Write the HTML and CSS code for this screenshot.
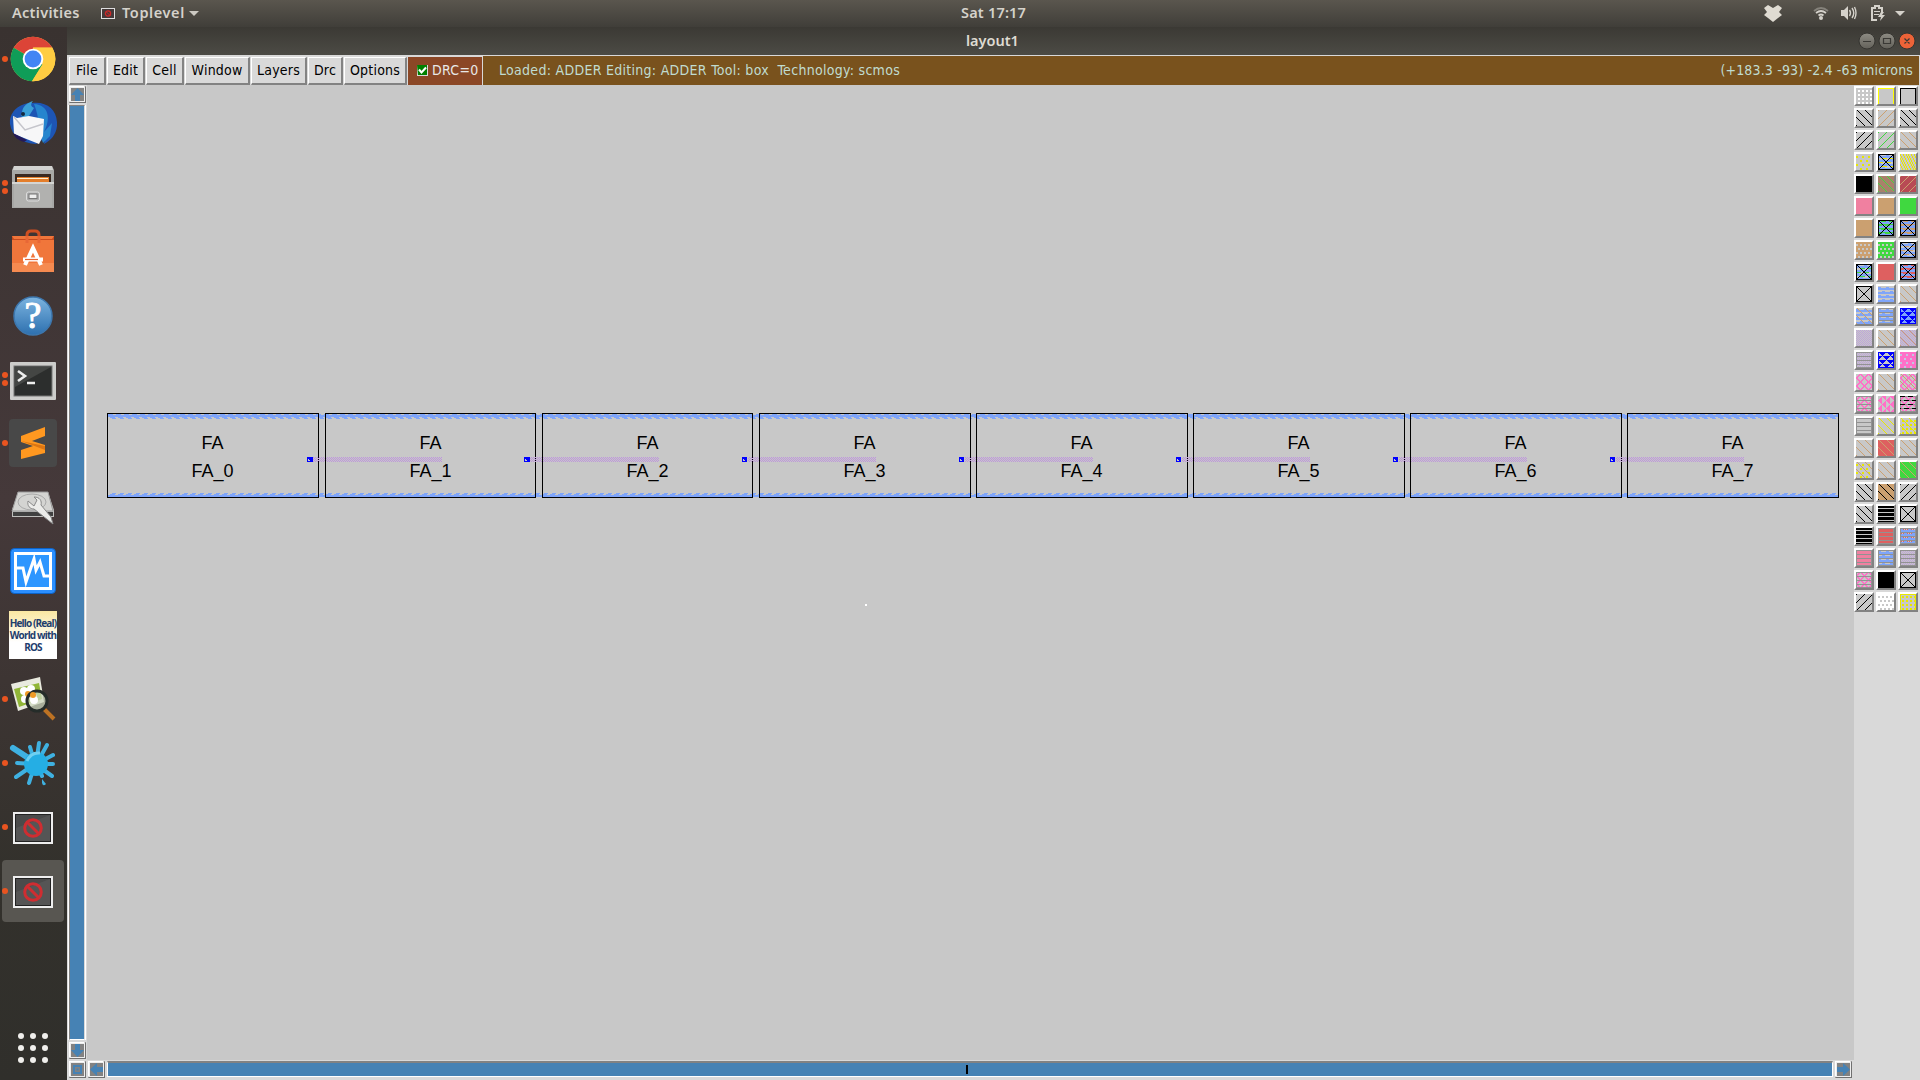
FILE: index.html
```html
<!DOCTYPE html>
<html lang="en">
<head>
<meta charset="utf-8">
<title>layout1</title>
<link rel="stylesheet" href="styles.css">
</head>
<body>
<header class="topbar">
  <span class="activities">Activities</span>
  <svg class="app-icon" width="14" height="11" viewBox="0 0 14 11"><rect x=".5" y=".5" width="13" height="10" fill="#443a3a" stroke="#ddd"/><circle cx="7" cy="5.500" r="2.600" fill="none" stroke="#d02828" stroke-width="1.300"/><path d="M5 3.500l4 4" stroke="#d02828"/></svg>
  <span class="app-name">Toplevel</span>
  <svg class="caret" width="10" height="5" viewBox="0 0 10 5"><path d="M0 0h10L5 5z" fill="#ccc9c2"/></svg>
  <span class="clock">Sat 17:17</span>
  <svg class="tray" width="160" height="27" viewBox="1760 0 160 27" fill="#d5d2cb">
    <path d="M1764 8l4-3 5 3 5-3 4 3-3 4 3 3-4 3-5 4-5-4-4-3 3-3z" fill="#dfdbd2"/>
    <g fill="none" stroke="#d5d2cb" stroke-width="1.700"><path d="M1814 11q7-6 14 0" stroke="#85827b"/><path d="M1816 13q5-4 10 0M1818.500 15.500q2.500-2 5 0"/></g><circle cx="1821" cy="18" r="2"/>
    <path d="M1841 10h3l4-4v14l-4-4h-3z"/><path d="M1849.500 10q2 3 0 6M1852 8q3.500 5 0 10M1854.500 7q3 6 0 12" fill="none" stroke="#d5d2cb" stroke-width="1.400"/>
    <path d="M1877 20h-5V8h3V6h4v2h3v5" fill="none" stroke="#d5d2cb" stroke-width="2"/><path d="M1874 11h6v1h-6zM1874 14h5v1h-5zM1881 12l-3 5h3l-1 4 5-6h-3l2-3z"/>
    <path d="M1895 11h10l-5 5z"/>
  </svg>
</header>
<div class="desktop">
  <nav class="dock">
    <div class="slot"><i class="pip"></i><svg width="48" height="48" viewBox="0 0 48 48"><circle cx="24" cy="24" r="22.300" fill="#ffcd42"/><path d="M24 24L4.700 12.850A22.300 22.300 0 0 1 43.300 12.850H24z" fill="#dc4437"/><path d="M24 24L4.700 12.850A22.300 22.300 0 0 0 23 46.300L33.700 29.600z" fill="#0f9d58"/><path d="M24 12.500h19.300A22.300 22.300 0 0 1 23 46.300L33.600 29z" fill="#ffcd42"/><circle cx="24" cy="24" r="10.300" fill="#fff"/><circle cx="24" cy="24" r="8.400" fill="#4285f4"/></svg></div>
    <div class="slot"><svg width="48" height="48" viewBox="0 0 48 48"><path d="M1 25C0 13 10 4 23 4c16-2 26 8 25 23-1 9-6 14-13 18l1-6-9 6C13 44 3 38 1 25z" fill="#1d55b4"/><path d="M13 13c1-6 5-9 11-11-3 4-2 5 1 7l-7 11-6-3z" fill="#3aa0d8"/><path d="M25 5c15 1 17 15 10 28l8-9-2 13-7 7c-5-12-3-25-9-39z" fill="#2685ce"/><path d="M4 17l4 2 12-2 15 3-1 17-4 8L5 35z" fill="#f7f7f8"/><path d="M5 18l11 13 18-6" fill="none" stroke="#c5c5cb" stroke-width="1.500"/><path d="M4 34l14 7-3 2C9 41 6 39 4 34z" fill="#241958"/><circle cx="14" cy="15" r="2" fill="#15293f"/></svg></div>
    <div class="slot"><i class="pip two"></i><svg width="48" height="48" viewBox="0 0 48 48"><path d="M5 3h38l2 4v38H3V7z" fill="#a8a8a6"/><path d="M5 3h38l1 4H4z" fill="#d3d3d1"/><path d="M6 11h36v9H6z" fill="#3a2920"/><path d="M8 14h32v6H8z" fill="#e47e2b"/><path d="M8 15h31v1H8z" fill="#fff0cf"/><path d="M5 20h38v24H5z" fill="#b1b1af"/><path d="M3 19h42v2H3z" fill="#d5d5d3"/><rect x="17.500" y="29" width="13" height="9" rx="2" fill="#aaa" stroke="#ddd"/><rect x="20" y="31" width="8" height="4.500" fill="#eee" stroke="#777"/></svg></div>
    <div class="slot low1"><svg width="48" height="48" viewBox="0 0 48 48"><path d="M18 15V7q0-4 4-4h4q4 0 4 4v8" fill="none" stroke="#cf4f21" stroke-width="3"/><path d="M3 8h42v36H3z" fill="#f0763b"/><path d="M3 8l2 3h38l2-3v4H3z" fill="#c84a1e"/><path d="M3 35h42v9H3z" fill="#f58a50"/><path d="M18 15V8M30 15V8" stroke="#e76736" stroke-width="3"/><path d="M16 37l8-17 8 17M14 31.500h20" fill="none" stroke="#fff" stroke-width="4"/><path d="M16 31.500h13" stroke="#e76736" stroke-width="1.200"/></svg></div>
    <div class="slot low1"><svg width="48" height="48" viewBox="0 0 48 48"><defs><linearGradient id="help" x2="0" y2="1"><stop stop-color="#7cb4e0"/><stop offset="1" stop-color="#2d70af"/></linearGradient></defs><circle cx="24" cy="24" r="19" fill="url(#help)" stroke="#3d77ae" stroke-width="1.500"/><text x="24" y="36" text-anchor="middle" class="question">?</text></svg></div>
    <div class="slot low2"><i class="pip two"></i><svg width="48" height="48" viewBox="0 0 48 48"><rect x="1" y="5" width="46" height="38" rx="1" fill="#cdcdcb"/><rect x="5" y="9" width="38" height="30" fill="#2c2e2d" stroke="#777"/><path d="M6 10h36L6 30z" fill="#444644"/><path d="M9 14l7 5-7 5M18 26h8" fill="none" stroke="#eee" stroke-width="2.600"/></svg></div>
    <div class="slot"><i class="pip"></i><svg width="48" height="48" viewBox="0 0 48 48"><rect width="48" height="48" rx="4" fill="#484848"/><path d="M12 17l24-9v9l-13 5 13 4v8l-24 6v-9l12-4-12-4z" fill="#ff9820"/><path d="M12 22l24 5v4l-13-5z" fill="#dc7613"/></svg></div>
    <div class="slot low1"><svg width="48" height="48" viewBox="0 0 48 48"><path d="M9 8h30l6 18v7H3v-7z" fill="#bebebc"/><path d="M9 8h30l5 19H3z" fill="#d4d4d2" stroke="#999"/><path d="M4 28h40v4H4z" fill="#404040"/><ellipse cx="23" cy="18" rx="14" ry="8" fill="none" stroke="#aaa"/><path d="M19 17l6 5 3-6-3-3c6 0 8 4 7 8l10 12 2 7-19-15c-4 0-7-3-6-8z" fill="#ececea" stroke="#898989"/></svg></div>
    <div class="slot"><svg width="48" height="48" viewBox="0 0 48 48"><rect x="1.500" y="1.500" width="45" height="45" rx="4" fill="#2b8fff" stroke="#0b63c9"/><rect x="6.500" y="6.500" width="35" height="35" fill="#2d96ff" stroke="#fff" stroke-width="3"/><path d="M8 21h6l3 14 8-23 2 11 4-8 4 14h7" fill="none" stroke="#fff" stroke-width="3"/></svg></div>
    <div class="slot"><div class="ros"><span>Hello (Real)</span><span>World with</span><span>ROS</span></div></div>
    <div class="slot"><i class="pip"></i><svg width="48" height="48" viewBox="0 0 48 48"><path d="M2 9l29-7 4 25-26 9z" fill="#e9eadf"/><path d="M5 14l25-6 3 16-23 8z" fill="#91b638"/><g fill="#fff"><circle cx="15" cy="16" r="4"/><circle cx="22" cy="14" r="4"/><circle cx="24" cy="22" r="4"/><circle cx="16" cy="24" r="4"/></g><circle cx="19" cy="19" r="3" fill="#ef9b26"/><path d="M35 34l10 10" stroke="#bd7223" stroke-width="4"/><circle cx="28" cy="26" r="10" fill="#ccd7bd" fill-opacity=".75" stroke="#252c29" stroke-width="3"/><circle cx="25" cy="25" r="4" fill="#fff"/><circle cx="24" cy="20" r="3" fill="#ef9b26"/></svg></div>
    <div class="slot"><i class="pip"></i><svg width="48" height="48" viewBox="0 0 48 48"><g stroke="#3fb1e1" stroke-linecap="round" stroke-width="4"><path d="M27 24L4 9" stroke-width="6"/><path d="M26 25L21 8M27 25L30 4M28 24L38 6M29 24L44 16M29 25L44 25M29 27L43 37M25 28L20 44M23 27L7 38M24 25L8 24M29 29L33 37"/></g><circle cx="27" cy="25" r="12" fill="#25aee4"/><path d="M33 40l4 5q-3 3-4-1z" fill="#3fb1e1"/><path d="M18 22q4-9 13-8" fill="none" stroke="#6ed0f2" stroke-width="3"/></svg></div>
    <div class="slot low1"><i class="pip"></i><svg width="40" height="32" viewBox="0 0 40 32"><use href="#blocked"/></svg></div>
    <div class="slot low1 active"><i class="pip"></i><svg width="40" height="32" viewBox="0 0 40 32"><g id="blocked"><rect width="40" height="32" fill="#eee"/><rect x="2.500" y="2.500" width="35" height="27" fill="#4b4b4b" stroke="#222"/><path d="M3 29V16L37 3v26z" fill="#606060" opacity=".5"/><circle cx="20" cy="16" r="8.300" fill="none" stroke="#cf2d31" stroke-width="3"/><path d="M14 10l12 12" stroke="#cf2d31" stroke-width="3"/></g></svg></div>
    <svg class="apps" width="32" height="32" viewBox="0 0 32 32" fill="#f0efec"><circle cx="4" cy="4" r="3"/><circle cx="16" cy="4" r="3"/><circle cx="28" cy="4" r="3"/><circle cx="4" cy="16" r="3"/><circle cx="16" cy="16" r="3"/><circle cx="28" cy="16" r="3"/><circle cx="4" cy="28" r="3"/><circle cx="16" cy="28" r="3"/><circle cx="28" cy="28" r="3"/></svg>
  </nav>
  <main class="window">
    <div class="titlebar"><span class="title">layout1</span>
      <svg width="58" height="18" viewBox="0 0 58 18"><defs><linearGradient id="knob" x2="0" y2="1"><stop stop-color="#8e8c84"/><stop offset="1" stop-color="#63615a"/></linearGradient></defs><g stroke="#353430"><circle cx="9" cy="9" r="8" fill="url(#knob)"/><circle cx="29" cy="9" r="8" fill="url(#knob)"/><circle cx="49" cy="9" r="8" fill="#ed6338"/></g><path d="M5 9.500h8M25.500 6.500h7v5h-7zM46.500 6.500l5 5m0-5l-5 5" fill="none" stroke="#3a3935" stroke-width="1.200"/></svg>
    </div>
    <div class="menubar">
      <button class="menu m-file">File</button><button class="menu m-edit">Edit</button><button class="menu m-cell">Cell</button><button class="menu m-window">Window</button><button class="menu m-layers">Layers</button><button class="menu m-drc">Drc</button><button class="menu m-options">Options</button>
      <div class="drc"><svg width="11" height="11" viewBox="0 0 11 11"><path d="M0 0h11v11H0z" fill="#d9d9d9"/><path d="M0 0h10v10H1z" fill="#008000"/><path d="M2 4.500l2.500 3L9 2.500" fill="none" stroke="#fff" stroke-width="2"/></svg><span>DRC=0</span></div>
      <div class="status"><span class="msg">Loaded: ADDER Editing: ADDER Tool: box&nbsp; Technology: scmos</span><span class="coords">(+183.3 -93) -2.4 -63 microns</span></div>
    </div>
    <div class="work">
      <div class="vscroll">
        <div class="arrow"><svg width="13" height="13" viewBox="0 0 13 13"><path d="M6.500 0l6.500 7H9v6H4V7H0z"/></svg></div>
        <div class="track"></div>
        <div class="arrow"><svg width="13" height="13" viewBox="0 0 13 13"><path d="M6.500 13L0 6h4V0h5v6h4z"/></svg></div>
      </div>
      <svg class="drawing" id="drawing" width="1767" height="975" viewBox="87 85 1767 975"></svg>
      <div class="palette" id="palette"></div>
      <div class="hscroll">
        <div class="arrow"><svg width="13" height="13" viewBox="0 0 13 13"><path d="M2 2h9v9H2zM4 4v5h5V4z" fill-rule="evenodd"/><path d="M5.500 5.500h2v2h-2z"/></svg></div>
        <div class="arrow"><svg width="13" height="13" viewBox="0 0 13 13"><path d="M0 6.500L7 0v4h6v5H7v4z"/></svg></div>
        <div class="track"><i></i></div>
        <div class="arrow"><svg width="13" height="13" viewBox="0 0 13 13"><path d="M13 6.500L6 0v4H0v5h6v4z"/></svg></div>
      </div>
    </div>
  </main>
</div>
<script src="layout.js"></script>
</body>
</html>
```
FILE: styles.css
```css
* { box-sizing: border-box; }
body { margin: 0; width: 1920px; height: 1080px; overflow: hidden; background: #3b3934; font-family: "DejaVu Sans Condensed", "DejaVu Sans", sans-serif; font-stretch: condensed; }
svg { display: block; }
.topbar { height: 27px; display: grid; grid-template-columns: 101px 21px 67px 10px 1fr 160px; grid-template-rows: 27px; align-items: center; background: linear-gradient(#5a564e, #403e39); color: #d5d2cb; font: 600 14.5px/24px "Noto Sans", sans-serif; }
.topbar span { height: 27px; }
.activities { padding-left: 12px; letter-spacing: .3px; }
.app-name { letter-spacing: .6px; }
.clock { padding-left: 762px; white-space: nowrap; letter-spacing: .2px; }
.desktop { display: flex; height: 1053px; }
.dock { width: 67px; display: flex; flex-direction: column; align-items: center; background: linear-gradient(#393230, #45393a 45%, #3d3533 62%, #33312c 80%, #302f2b); }
.slot { width: 67px; height: 64px; flex: none; display: grid; place-items: center; padding-right: 1px; position: relative; }
.slot.active::before { content: ""; position: absolute; left: 2px; top: 1px; width: 62px; height: 62px; border-radius: 4px; background: #585651; }
.slot svg { position: relative; }
.low1 { padding-top: 2px; }
.low2 { padding-top: 3px; }
.pip { position: absolute; z-index: 1; left: 2px; top: 29px; width: 6px; height: 6px; border-radius: 3px; background: #e95420; }
.pip.two { top: 25px; box-shadow: 0 8px #e95420; }
.question { font: 38px "Liberation Serif", serif; fill: #fff; stroke: #fff; }
.ros { width: 48px; height: 48px; background: linear-gradient(#fae7a2, #fff 65%); display: flex; flex-direction: column; align-items: center; justify-content: center; color: #1e3d6d; font: 700 10px/12px "Open Sans", sans-serif; letter-spacing: -.85px; white-space: nowrap; }
.apps { margin: 109px 1px 0 0; }
.window { flex: 1; display: flex; flex-direction: column; background: #d9d9d9; }
.titlebar { height: 28px; display: flex; justify-content: flex-end; align-items: center; padding-right: 4px; background: linear-gradient(#3b3934, #4c4b45); color: #dfdbd2; font: 600 14.5px/26px "Noto Sans", sans-serif; }
.title { flex: 1; height: 28px; padding-left: 899px; }
.menubar { height: 30px; display: flex; padding: 1px 1px 0 2px; font-size: 14px; }
.menu { height: 28px; margin: 1px 1px 0 0; padding: 0 0 1px; border: 1px solid #fff; border-right: 2px solid #828282; border-bottom: 2px solid #828282; background: #d9d9d9; font: inherit; font-stretch: condensed; letter-spacing: .2px; text-align: center; color: #000; white-space: nowrap; }
.m-file { width: 37px; } .m-edit { width: 38px; } .m-cell { width: 38px; } .m-window { width: 65px; } .m-layers { width: 56px; } .m-drc { width: 35px; } .m-options { width: 63px; }
.drc { margin-top: 1px; width: 74px; height: 28px; background: #8b4726; color: #e8e8e8; display: flex; align-items: center; gap: 4px; padding: 0 0 1px 9px; letter-spacing: .3px; }
.drc span { padding-bottom: 1px; }
.status { margin-left: 1px; flex: 1; height: 29px; background: #79521d; color: #c0dcd0; display: flex; justify-content: space-between; align-items: center; padding: 0 6px 1px 16px; }
.msg { letter-spacing: .29px; }
.coords { letter-spacing: .16px; }
.work { flex: 1; display: grid; grid-template: 975px 20px / 20px 1767px 66px; }
.vscroll { display: flex; flex-direction: column; padding: 1px 0 1px 2px; gap: 2px; }
.vscroll .track { flex: 1; width: 16px; background: #4682b4; border: 1px solid #828282; border-right-color: #d9d9d9; border-bottom-color: #fff; box-shadow: 1px 0 #fff, -1px 0 #fff; }
.arrow { flex: none; width: 17px; height: 17px; border: 1px solid #fff; border-right: 2px solid #707070; border-bottom: 2px solid #707070; background: #828282; outline: 1px solid #eee; outline-offset: -2px; }
.arrow svg { fill: #4682b4; margin: .5px; }
.drawing { background: #c8c8c8; shape-rendering: crispEdges; }
.drawing text { font: 18px "Liberation Sans", sans-serif; text-anchor: middle; }
.palette { display: grid; grid-template-columns: repeat(3, 20px); grid-auto-rows: 20px; gap: 2px; align-content: start; padding-top: 1px; }
.swatch { border: 2px solid #fff; border-right-color: #828282; border-bottom-color: #828282; background: #c8c8c8; }
.swatch svg { shape-rendering: crispEdges; }
.hscroll { grid-column: 1 / 3; display: flex; padding: 1px 2px 2px 2px; gap: 2px; }
.hscroll .track { flex: 1; height: 16px; border: 1px solid #fff; border-top: 2px solid #828282; background: #4682b4; }
.hscroll .track i { display: block; width: 2px; height: 9px; margin: 2px 0 0 858px; background: #000; }
```
FILE: layout.js
```js
const mod = (a, n) => ((a % n) + n) % n;
const patterns = {
  solid: () => true,
  back: (x, y) => mod(x - y - 1, 8) === 0,
  fwd: (x, y) => mod(x + y, 8) === 0,
  dots: (x, y) => x % 4 > 1 && y % 4 > 1,
  tile: (x, y) => mod(x + (y & 4 ? 2 : 0), 4) < 2 && y % 4 > 1,
  stag: (x, y) => mod(x + (y & 4 ? 2 : 0), 6) < 2 && y % 4 > 1,
  speck: (x, y) => mod(x * 3 + (y >> 1) * 5, 8) < 3,
  u: (x, y) => x === 0 || x === 15 || y === 0,
  x: (x, y) => x === 0 || x === 15 || y === 0 || y === 15 || x === y || x + y === 15,
  metal: (x, y) => y % 4 > 1 || mod(x + (y & 4 ? 4 : 0), 8) < 3 && y % 4 === 1,
  dash: (x, y) => y % 4 === 0 && mod(x + y, 8) < 5,
  check: (x, y) => (x + y) % 2 === 0,
  lines: (x, y) => y % 4 === 0 || y === 15 || x === 0 || x === 15,
  bars: (x, y) => y % 4 !== 2,
  tri: (x, y) => x === 0 || x === 15 || y === 0 || y === 15 || Math.abs(mod(x + (y & 4 ? 4 : 0), 8) - 4) < 4 - y % 4,
  triv: (x, y) => Math.abs(mod(y + (x & 4 ? 4 : 0), 8) - 4) < 1 + x % 4,
  mesh: (x, y) => mod(x + y - 3, 8) < 2 || mod(x - y - 4, 8) < 2
};
const K = '#000', T = '#cba070', G = '#40d840', R = '#de6060', P = '#f080a0', M = '#7fa5fa', Y = '#e8e800', V = '#bea4da', H = '#929292', B = '#0000ff', N = '#ff70c8', W = '#fff', C = '#c8c8c8';
const layers = [
  [['dots', W]], [['u', '#ff0']], [['u', K]],
  [['back', K]], [['fwd', T]], [['back', K]],
  [['fwd', K]], [['fwd', G]], [['back', T]],
  [['stag', Y]], [['metal', M], ['dash', Y], ['x', K]], [['speck', Y]],
  [['solid', K]], [['solid', '#a8826a'], ['back', G]], [['solid', '#b84a54'], ['fwd', T]],
  [['solid', P]], [['solid', T]], [['solid', G]],
  [['solid', T]], [['solid', G], ['metal', M], ['x', K]], [['solid', T], ['metal', M], ['x', K]],
  [['solid', T], ['tile', C]], [['solid', G], ['tile', C]], [['metal', M], ['dash', T], ['x', K]],
  [['metal', M], ['dash', G], ['x', K]], [['solid', R]], [['solid', R], ['metal', M], ['x', K]],
  [['x', K]], [['metal', M]], [['back', T]],
  [['metal', M], ['back', T]], [['metal', M], ['lines', H]], [['solid', M], ['tri', B]],
  [['check', V]], [['back', T]], [['check', V], ['back', T]],
  [['check', V], ['lines', H]], [['tri', B]], [['solid', N], ['stag', '#c4c4e0']],
  [['mesh', N]], [['back', T]], [['mesh', N], ['back', T]],
  [['mesh', N], ['lines', H]], [['triv', N]], [['mesh', N], ['lines', H], ['dash', K]],
  [['lines', H]], [['back', Y]], [['dots', Y], ['back', Y]],
  [['back', T]], [['solid', R], ['back', T]], [['back', T]],
  [['stag', Y], ['back', T]], [['back', T]], [['solid', G], ['back', T]],
  [['back', K]], [['solid', T], ['back', K]], [['fwd', K]],
  [['back', K]], [['bars', K]], [['x', K]],
  [['bars', K]], [['solid', R], ['lines', H]], [['check', R], ['metal', M], ['dash', R], ['lines', H]],
  [['solid', P], ['lines', H]], [['metal', M], ['lines', H]], [['check', V], ['lines', H]],
  [['mesh', N], ['lines', H]], [['solid', K]], [['x', K]],
  [['fwd', K]], [['solid', W], ['tile', C]], [['solid', C], ['u', Y], ['dots', Y]]
];
const pixels = (name, color) => {
  let d = '';
  for (let y = 0; y < 16; y++) for (let x = 0; x < 16; x++) if (patterns[name](x, y)) d += `M${x} ${y}h1v1h-1z`;
  return `<path d="${d}" fill="${color}"/>`;
};
document.getElementById('palette').innerHTML = layers.map(l =>
  `<div class="swatch"><svg width="16" height="16" viewBox="0 0 16 16">${l.map(p => pixels(...p)).join('')}</svg></div>`).join('');

const starts = [107, 325, 542, 759, 976, 1193, 1410, 1627];
let s = `<defs><pattern id="checker" width="2" height="2" patternUnits="userSpaceOnUse"><path d="M0 0h1v1H0zM1 1h1v1H1z" fill="#be96dc"/></pattern></defs>
<g stroke="#7fa5fa"><path d="M108 416h1731M108 496h1731" stroke-width="2"/>
<path d="M108 414.500h1731" stroke-dasharray="5 3"/><path d="M110 417.500h1729M110 494.500h1729" stroke-dasharray="5 3"/><path d="M112 418.500h1727M112 493.500h1727" stroke-dasharray="4 4"/></g>`;
starts.forEach((x, i) => {
  if (i) {
    const left = starts[i - 1] + (i === 2 ? 199 : 200);
    s += `<rect x="${left + 6}" y="457" width="${x + 117 - left - 6}" height="5" fill="url(#checker)"/>`;
    s += `<rect x="${left}" y="457" width="${i < 3 ? 6 : 5}" height="5" fill="#00f"/><path d="M${left + 1} 459h1v1h1v1h-2z" fill="#c8c8c8"/>`;
  }
  s += `<rect x="${x + .5}" y="413.5" width="${i === 1 || i === 2 ? 210 : 211}" height="84" fill="none" stroke="#000"/>`;
  s += `<text x="${x + 105.4}" y="449">FA</text><text x="${x + 105.4}" y="477">FA_${i}</text>`;
});
s += '<rect x="865" y="604" width="2" height="2" fill="#fff"/>';
document.getElementById('drawing').innerHTML = s;
```
